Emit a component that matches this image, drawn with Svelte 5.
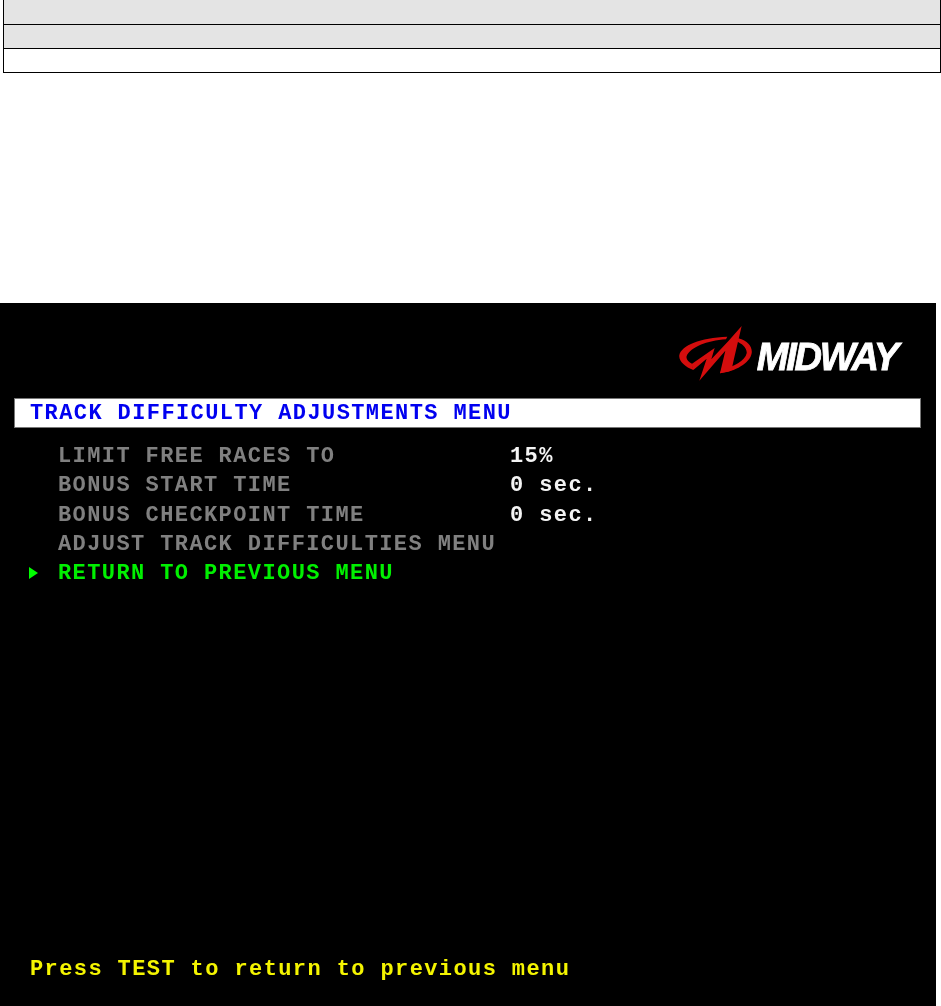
<script>
  const rows = [
    { label: 'LIMIT FREE RACES TO', value: '15%' },
    { label: 'BONUS START TIME', value: '0 sec.' },
    { label: 'BONUS CHECKPOINT TIME', value: '0 sec.' },
    { label: 'ADJUST TRACK DIFFICULTIES MENU', value: '' }
  ];
</script>

<div class="table">
  <div class="row shaded first"></div>
  <div class="row shaded"></div>
  <div class="row"></div>
</div>

<div class="screen">
  <div class="logo">
    <svg class="mark" width="90" height="65" viewBox="0 0 270 195">
      <g fill="#d40d0d">
        <path d="M28 105C35 76 90 53 172 50L168 58C110 62 62 82 50 108C47 118 56 126 66 131L70 150C45 140 25 122 28 105Z"/>
        <path d="M205 55C235 62 248 82 245 100C240 130 195 155 150 160L155 148C190 142 226 122 230 100C232 85 216 70 198 64Z"/>
        <path d="M70 150L64 133L134 84L124 118L176 62L215 18L192 116L184 152L150 160L166 92L88 182L110 116Z"/>
      </g>
    </svg>
    <span class="wordmark">MIDWAY</span>
  </div>

  <div class="title">TRACK DIFFICULTY ADJUSTMENTS MENU</div>

  <div class="menu">
    {#each rows as row}
      <div class="item">
        <span class="label">{row.label}</span>
        {#if row.value}<span class="value">{row.value}</span>{/if}
      </div>
    {/each}
    <div class="item current">
      <svg class="arrow" width="9" height="12" viewBox="0 0 9 12"><path d="M0 0L9 6L0 12Z" fill="#00ff00"/></svg>
      <span class="label">RETURN TO PREVIOUS MENU</span>
    </div>
  </div>

  <div class="hint">Press TEST to return to previous menu</div>
</div>

<style>
  :global(body) {
    background: #fff;
  }

  .table {
    margin: 0 0 0 3px;
    width: 938px;
    box-sizing: border-box;
    border-left: 1px solid #000;
    border-right: 1px solid #000;
  }

  .row {
    height: 24px;
    box-sizing: border-box;
    border-bottom: 1px solid #000;
  }

  .first {
    height: 25px;
  }

  .shaded {
    background: #e4e4e4;
  }

  .screen {
    margin-top: 230px;
    width: 936px;
    height: 703px;
    box-sizing: border-box;
    padding: 17px 0 0 14px;
    display: flex;
    flex-direction: column;
    background: #000;
    font-family: "Liberation Mono", monospace;
    font-weight: bold;
    font-size: 22px;
    letter-spacing: 1.4px;
    line-height: 29.3px;
    white-space: nowrap;
  }

  .logo {
    height: 78px;
    margin-right: 39px;
    display: flex;
    justify-content: flex-end;
    align-items: flex-start;
  }

  .mark {
    filter: blur(0.4px);
  }

  .wordmark {
    font-family: "Liberation Sans", sans-serif;
    font-style: italic;
    font-weight: bold;
    font-size: 38px;
    line-height: 38px;
    letter-spacing: -2.2px;
    color: #fff;
    margin-left: -3px;
    margin-top: 18px;
    -webkit-text-stroke: 0.8px #fff;
    filter: blur(0.5px);
  }

  .title {
    width: 907px;
    height: 30px;
    box-sizing: border-box;
    padding-left: 15px;
    background: #fff;
    color: #0000f0;
    border: 1px solid #777;
    filter: blur(0.3px);
  }

  .menu {
    margin-top: 14px;
    padding-left: 44px;
    filter: blur(0.3px);
  }

  .item {
    position: relative;
    display: flex;
    color: #808080;
  }

  .label {
    width: 452px;
  }

  .value {
    color: #f4f4f4;
  }

  .current {
    color: #00f000;
  }

  .arrow {
    position: absolute;
    left: -29px;
    top: 8px;
  }

  .hint {
    margin-top: auto;
    margin-bottom: 22px;
    padding-left: 16px;
    color: #f4f400;
    filter: blur(0.3px);
  }
</style>
